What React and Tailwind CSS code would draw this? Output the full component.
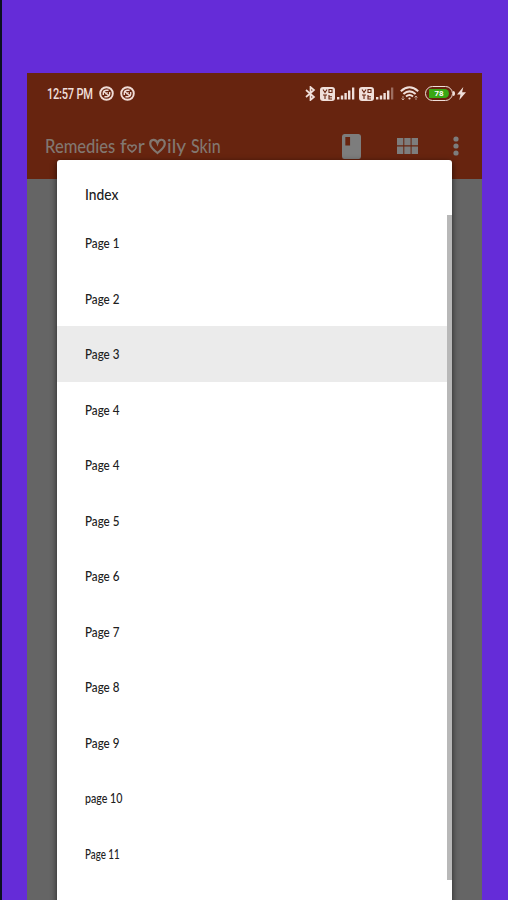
import React from "react";

const pages = ["Page 1", "Page 2", "Page 3", "Page 4", "Page 4", "Page 5", "Page 6", "Page 7", "Page 8", "Page 9", "page 10", "Page 11"];

function AppBadge() {
  return (
    <svg className="h-[15px] w-[15px]" viewBox="0 0 15 15" fill="none" stroke="#f0dcd6">
      <circle cx="7.5" cy="7.5" r="6.3" strokeWidth="1.9" />
      <path d="M4.3 9V6.6Q4.8 4.3 7.3 4.3H9.6M5.4 10.7H8Q10.5 10.5 10.7 8V6M4.5 5.2l6 5M6.3 7.8l2.4-1.2" strokeWidth="1.4" />
    </svg>
  );
}

function Volte() {
  return (
    <span className="flex h-[14px] w-[15px] flex-col items-center justify-center rounded-[3px] bg-[#f0dfda]">
      <svg className="h-[12px] w-[13px]" viewBox="0 0 13 12" fill="none" stroke="#67240f" strokeWidth="1.1">
        <path d="M2 1.5l2 3 2-3M8 1.5h3v3H8zM2 7h4M4 7v4M8 7v4h3M8 8.8h3" />
      </svg>
    </span>
  );
}

function Signal({ dim }) {
  return (
    <svg className="h-[13px] w-[18px]" viewBox="0 0 18 13" fill="#f0dfda">
      <path d="M0 10h2.4v2.5H0zM3.8 8.5h2.4v4H3.8zM7.4 6h2.4v6.5H7.4zM11 3.5h2.4v9H11z" />
      <path d="M15 .5h2.3v12H15z" opacity={dim ? 0.4 : 1} />
    </svg>
  );
}

function StatusBar() {
  return (
    <div className="flex h-[41px] items-center pl-[20px] pr-[16px] text-[#f0dfda]">
      <div className="w-[52px] whitespace-nowrap text-[14px] leading-none">
        <span className="inline-block origin-left scale-x-[0.79] font-['Roboto',sans-serif] font-medium tracking-[-0.3px]">12:57 PM</span>
      </div>
      <div className="flex gap-[6px]">
        <AppBadge />
        <AppBadge />
      </div>
      <div className="ml-auto flex items-center">
        <svg className="mr-[4px] h-[15px] w-[11px]" viewBox="0 0 11 15" fill="none" stroke="#f0dfda" strokeWidth="1.7">
          <path d="M1 4l8 7-3.5 3V1L9 4l-8 7" />
        </svg>
        <Volte />
        <span className="ml-[2px] mr-[4px]"><Signal /></span>
        <Volte />
        <span className="ml-[2px] mr-[6px]"><Signal dim /></span>
        <svg className="mr-[6px] h-[15px] w-[19px]" viewBox="0 0 19 15" fill="none" stroke="#f0dfda" strokeWidth="2">
          <path d="M.8 5.2Q9.5-2.6 18.2 5.2M3.4 8Q9.5 2.8 15.6 8M6 10.5Q9.5 7.5 13 10.5" />
          <circle cx="9.5" cy="12.5" r="1.1" fill="#f0dfda" stroke="none" />
          <path d="M3 10v4M1.5 12.5L3 14l1.5-1.5M16 14v-4M14.5 11.5L16 10l1.5 1.5" strokeWidth="1" opacity=".6" />
        </svg>
        <span className="flex h-[15px] w-[28px] items-center justify-center rounded-full border-[1.5px] border-[#f0dfda]">
          <span className="flex h-[9px] w-[20px] items-center justify-center rounded-l-[2px] rounded-r-full bg-[#39a814] font-['Roboto',sans-serif] text-[8px] font-bold leading-none text-white">78</span>
        </span>
        <span className="h-[5px] w-[2px] rounded-r bg-[#f0dfda]" />
        <svg className="ml-[2px] h-[13px] w-[9px]" viewBox="0 0 9 13" fill="#f0dfda">
          <path d="M6.3 0L0 7.5h3.5L2.3 13 9 5.2H5.1z" />
        </svg>
      </div>
    </div>
  );
}

function AppBar() {
  return (
    <div className="flex h-[65px] items-center pl-[18px] pr-[23px] pb-[1px] text-[#827770]">
      <div className="flex w-[176px] items-center whitespace-nowrap font-['Lato',sans-serif] text-[19px] leading-[24px]">
        <span className="w-[75px]"><span className="inline-block origin-left scale-x-[0.87] font-medium">Remedies</span></span>
        <span className="flex w-[29px] shrink-0 items-center font-medium">
          <span>f</span>
          <svg className="mt-[4px] h-[9px] w-[10px] shrink-0" viewBox="0 0 10 9" fill="none" stroke="currentColor" strokeWidth="1.6">
            <path d="M5 8C2 6 .8 4.5.8 3 .8.4 4 .4 5 2.5 6 .4 9.2.4 9.2 3 9.2 4.5 8 6 5 8z" />
          </svg>
          <span className="ml-px">r</span>
        </span>
        <svg className="mr-[1px] h-[17px] w-[17px] shrink-0" viewBox="0 0 17 16" fill="none" stroke="currentColor" strokeWidth="2.2">
          <path d="M8.5 14.5C4 11 1.2 8.5 1.2 5.2 1.2.2 7 .1 8.5 4.6 10-.1 15.8.2 15.8 5.2c0 3.3-2.8 5.8-7.3 9.3z" />
        </svg>
        <span className="w-[22px] shrink-0"><span className="inline-block origin-left font-medium">ily</span></span>
        <span className="ml-[2px] w-[30px] shrink-0"><span className="inline-block origin-left scale-x-[0.84] font-medium">Skin</span></span>
      </div>
      <div className="ml-auto flex items-center">
        <svg className="mr-[36px] h-[25px] w-[19px]" viewBox="0 0 20 25" preserveAspectRatio="none" fill="#7d7d7d">
          <path fillRule="evenodd" d="M2.5 0h15Q20 0 20 2.5v20Q20 25 17.5 25h-15Q0 25 0 22.5v-20Q0 0 2.5 0zM3.5 3v8.5h5V3z" />
        </svg>
        <svg className="mr-[35px] h-[16px] w-[21px]" viewBox="0 0 21 16" fill="#7d7d7d">
          <path d="M0 0h6.3v7.3H0zM7.3 0h6.3v7.3H7.3zM14.6 0H21v7.3h-6.4zM0 8.5h6.3V16H0zM7.3 8.5h6.3V16H7.3zM14.6 8.5H21V16h-6.4z" />
        </svg>
        <svg className="h-[20px] w-[6px]" viewBox="0 0 6 20" fill="#7d7d7d">
          <circle cx="3" cy="3" r="2.6" /><circle cx="3" cy="10" r="2.6" /><circle cx="3" cy="17" r="2.6" />
        </svg>
      </div>
    </div>
  );
}

function IndexDialog() {
  return (
    <section className="absolute left-[30px] top-[87px] flex h-[760px] w-[395px] flex-col overflow-hidden rounded-[3px] bg-white font-['Lato',sans-serif] text-[#202020] shadow-[0_2px_6px_rgba(0,0,0,0.65)]">
      <h1 className="flex h-[55px] shrink-0 items-center pb-[2px] pl-[28px] pt-[14px] text-[16px] font-medium leading-none">
        <span className="origin-left scale-x-[0.86]">Index</span>
      </h1>
      <div className="relative">
        <ul>
          {pages.map((page, i) => (
            <li key={i} className={`flex h-[55.5px] items-center pl-[28px] pt-[1px] text-[14px] leading-none ${i === 2 ? "bg-[#ebebeb]" : ""}`}>
              <span className={`origin-left font-medium ${page === "Page 11" ? "scale-x-[0.7]" : page === "page 10" ? "scale-x-[0.76]" : "scale-x-[0.83]"}`}>{page}</span>
            </li>
          ))}
        </ul>
        <div className="absolute right-0 top-0 h-[665px] w-[5px] bg-[#b8b8b8]" />
      </div>
    </section>
  );
}

export default function App() {
  return (
    <main className="h-[900px] w-[508px] overflow-hidden border-l-2 border-[#0b1020] bg-[#652cd8] pl-[25px] pt-[73px]">
      <div className="relative h-[827px] w-[455px] overflow-hidden bg-[#656565]">
        <header className="h-[106px] bg-[#67240f]">
          <StatusBar />
          <AppBar />
        </header>
        <IndexDialog />
      </div>
    </main>
  );
}
